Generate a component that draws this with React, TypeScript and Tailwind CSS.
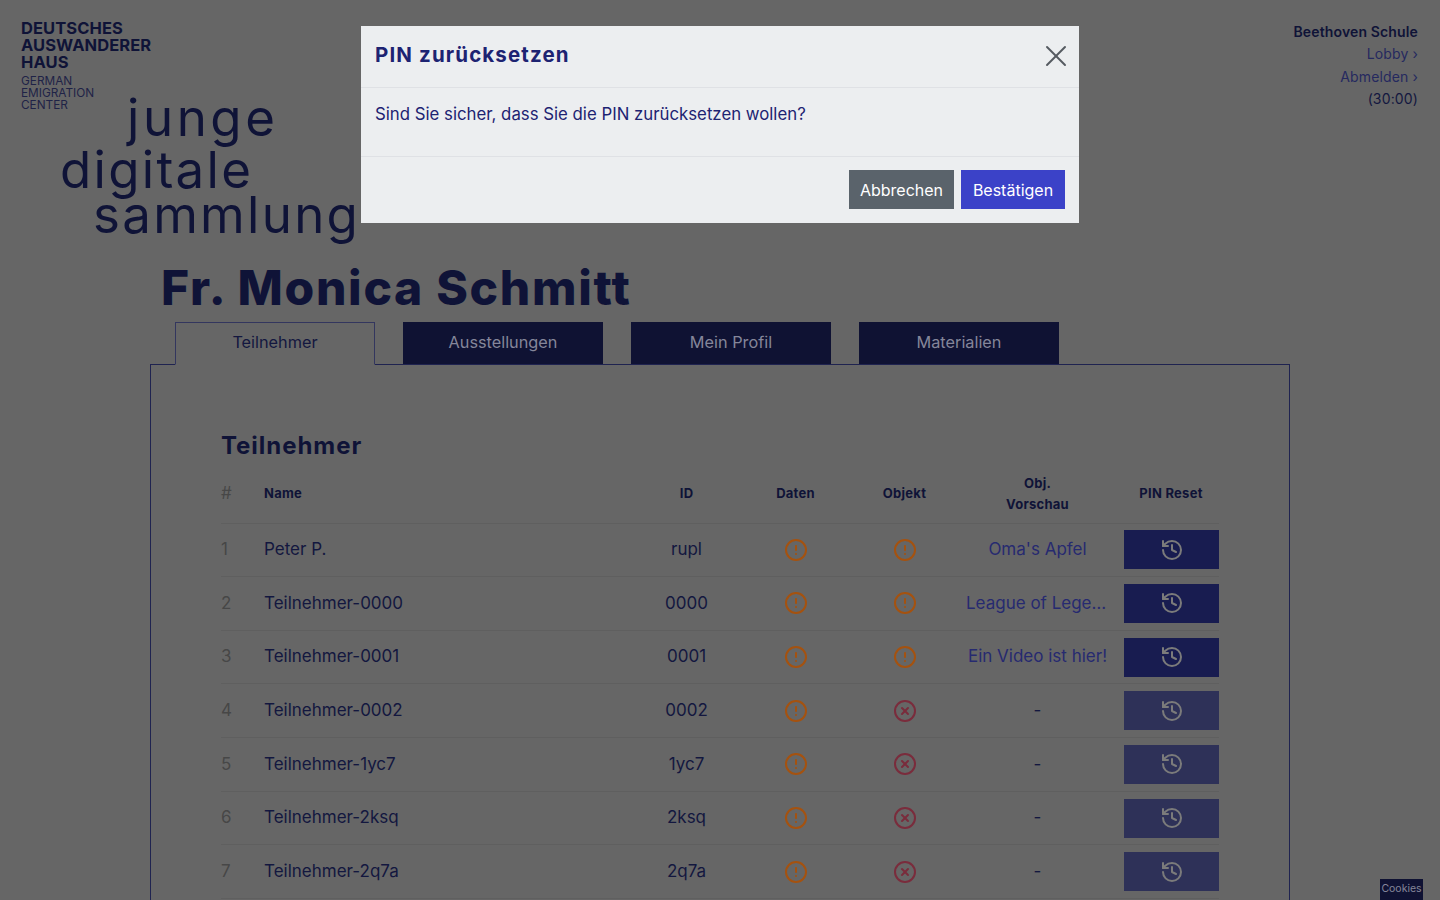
import { History, CircleAlert, CircleX, X } from "lucide-react";

type Row = { n: number; name: string; id: string; obj: boolean; preview: string };

const rows: Row[] = [
  { n: 1, name: "Peter P.", id: "rupl", obj: true, preview: "Oma's Apfel" },
  { n: 2, name: "Teilnehmer-0000", id: "0000", obj: true, preview: "League of Legends" },
  { n: 3, name: "Teilnehmer-0001", id: "0001", obj: true, preview: "Ein Video ist hier!" },
  { n: 4, name: "Teilnehmer-0002", id: "0002", obj: false, preview: "-" },
  { n: 5, name: "Teilnehmer-1yc7", id: "1yc7", obj: false, preview: "-" },
  { n: 6, name: "Teilnehmer-2ksq", id: "2ksq", obj: false, preview: "-" },
  { n: 7, name: "Teilnehmer-2q7a", id: "2q7a", obj: false, preview: "-" },
];

const gridCols = "grid grid-cols-[43px_368px_109px_109px_109px_157px_103px] items-center";

function TableRow({ r }: { r: Row }) {
  return (
    <div className={`${gridCols} h-[53.67px] border-t border-[#5f5f5f] text-[17px] text-[#13173f]`}>
      <div className="text-[#474747]">{r.n}</div>
      <div>{r.name}</div>
      <div className="text-center">{r.id}</div>
      <div className="flex justify-center">
        <CircleAlert size={24} strokeWidth={2} className="text-[#a5520f]" />
      </div>
      <div className="flex justify-center">
        {r.obj ? (
          <CircleAlert size={24} strokeWidth={2} className="text-[#a5520f]" />
        ) : (
          <CircleX size={24} strokeWidth={2} className="text-[#7a2c3c]" />
        )}
      </div>
      <div className={`px-[7px] text-center truncate ${r.obj ? "text-[#262a70]" : "text-[#13173f]"}`}>
        {r.preview}
      </div>
      <div className="flex justify-end">
        <div className={`w-[95px] h-[39px] flex items-center justify-center ${r.obj ? "bg-[#181c50]" : "bg-[#2e3158]"}`}>
          <History size={24} strokeWidth={2} className="text-[#7b7b7b]" />
        </div>
      </div>
    </div>
  );
}

export default function App() {
  return (
    <div className="relative h-[900px] overflow-hidden bg-[#666666] text-[#13173f] font-['Inter',sans-serif]">
      <header className="flex justify-between pl-[21px] pr-[22px] pt-[20px]">
        <div>
          <div className="text-[16.5px] leading-[17px] font-bold tracking-[0.005em] text-[#0f1337]">
            DEUTSCHES<br />AUSWANDERER<br />HAUS
          </div>
          <div className="mt-[4px] text-[11.8px] leading-[12px] text-[#1f2347]">
            GERMAN<br />EMIGRATION<br />CENTER
          </div>
          <div className="-mt-[19px] text-[51px] leading-[52px] tracking-[0.045em] text-[#0f1337]">
            <div className="ml-[106px] tracking-[0.07em]">junge</div>
            <div className="ml-[39px]">digitale</div>
            <div className="ml-[72px] -mt-[7px]">sammlung</div>
          </div>
        </div>
        <div className="text-right text-[14px] leading-[22.3px] tracking-[0.01em] pt-[1px] text-[#25295f]">
          <div className="font-semibold text-[#0f1337]">Beethoven Schule</div>
          <div>Lobby ›</div>
          <div>Abmelden ›</div>
          <div className="text-[#13173f]">(30:00)</div>
        </div>
      </header>

      <h1 className="ml-[161px] mt-[19px] text-[48px] leading-[56px] font-extrabold tracking-[0.035em] text-[#0f1337]">
        Fr. Monica Schmitt
      </h1>

      <nav className="mt-[6px] ml-[175px] flex gap-[28px] text-[16.3px] text-center">
        <div className="relative z-10 -mb-px w-[200px] h-[43px] border border-b-[#666666] border-[#33365e] bg-[#666666] leading-[38px] text-[#13173f]">
          Teilnehmer
        </div>
        <div className="w-[200px] h-[42px] bg-[#0f1233] leading-[40px] text-[#85869a]">Ausstellungen</div>
        <div className="w-[200px] h-[42px] bg-[#0f1233] leading-[40px] text-[#85869a]">Mein Profil</div>
        <div className="w-[200px] h-[42px] bg-[#0f1233] leading-[40px] text-[#85869a]">Materialien</div>
      </nav>

      <main className="ml-[150px] w-[1140px] h-[600px] border border-[#1f2350] pl-[70px] pt-[66px]">
        <h2 className="text-[24px] leading-[30px] font-bold tracking-[0.04em] text-[#0f1337]">Teilnehmer</h2>
        <div className="w-[998px] mt-[4px]">
          <div className={`${gridCols} h-[57.5px] text-[13px] leading-[21px] font-bold tracking-[0.02em] text-center text-[#0f1337]`}>
            <div className="text-left text-[17px] font-normal text-[#474747]">#</div>
            <div className="text-left">Name</div>
            <div>ID</div>
            <div>Daten</div>
            <div>Objekt</div>
            <div>Obj.<br />Vorschau</div>
            <div className="pl-[7px]">PIN Reset</div>
          </div>
          {rows.map((r) => (
            <TableRow key={r.n} r={r} />
          ))}
          <div className="border-t border-[#5f5f5f]" />
        </div>
      </main>

      <div className="absolute right-[17px] bottom-0 w-[43px] h-[21px] bg-[#0f1233] text-center text-[10.5px] leading-[20px] text-[#85869a]">
        Cookies
      </div>

      <div className="absolute left-[361px] top-[26px] w-[718px] h-[197px] bg-[#eceef0] text-[#1d2372] flex flex-col">
        <div className="h-[62px] pl-[14px] pr-[5px] pb-[2px] flex items-center justify-between border-b border-[#dfe1e5]">
          <div className="text-[20.5px] font-bold tracking-[0.055em]">PIN zurücksetzen</div>
          <X size={36} strokeWidth={1.3} className="text-[#555a60]" />
        </div>
        <div className="h-[69px] px-[14px] pt-[15px] text-[16.8px] leading-[22px] border-b border-[#dfe1e5]">
          Sind Sie sicher, dass Sie die PIN zurücksetzen wollen?
        </div>
        <div className="flex-1 flex justify-end items-center gap-[7px] pr-[14px] pb-[1px] text-[16px] text-white">
          <div className="w-[105px] h-[39px] bg-[#5a636b] flex items-center justify-center">Abbrechen</div>
          <div className="w-[104px] h-[39px] bg-[#3b42c8] flex items-center justify-center">Bestätigen</div>
        </div>
      </div>
    </div>
  );
}
